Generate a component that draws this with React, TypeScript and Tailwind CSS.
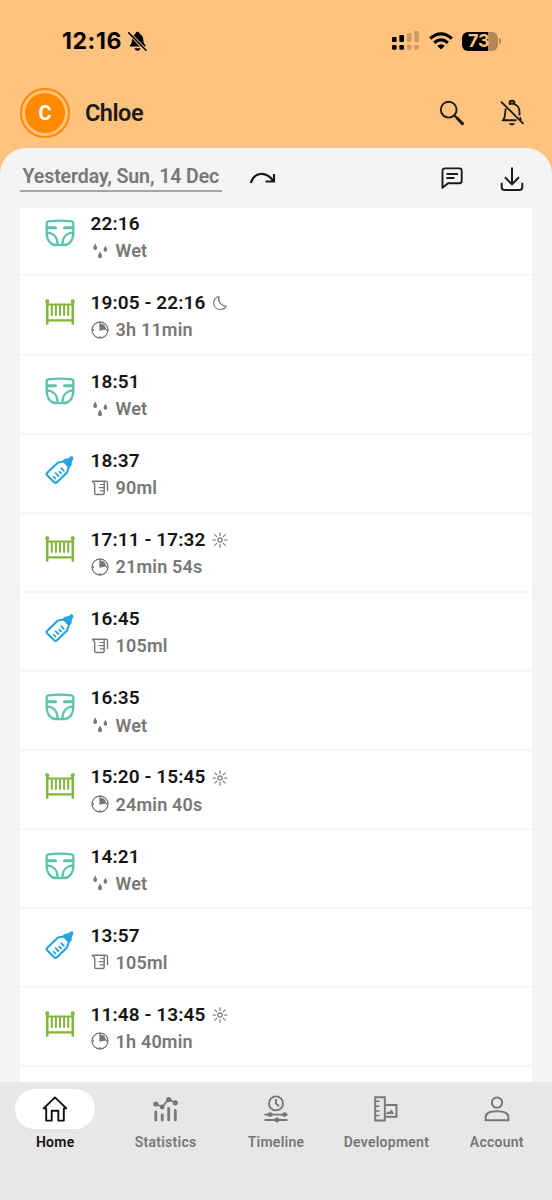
import type { ReactNode } from 'react';

type EntryKind = 'diaper' | 'sleep' | 'bottle';

type Entry = {
    kind: EntryKind;
    time: string;
    detail: string;
    period?: 'night' | 'day';
};

const entries: Entry[] = [
    { kind: 'diaper', time: '22:16', detail: 'Wet' },
    { kind: 'sleep', time: '19:05 - 22:16', detail: '3h 11min', period: 'night' },
    { kind: 'diaper', time: '18:51', detail: 'Wet' },
    { kind: 'bottle', time: '18:37', detail: '90ml' },
    { kind: 'sleep', time: '17:11 - 17:32', detail: '21min 54s', period: 'day' },
    { kind: 'bottle', time: '16:45', detail: '105ml' },
    { kind: 'diaper', time: '16:35', detail: 'Wet' },
    { kind: 'sleep', time: '15:20 - 15:45', detail: '24min 40s', period: 'day' },
    { kind: 'diaper', time: '14:21', detail: 'Wet' },
    { kind: 'bottle', time: '13:57', detail: '105ml' },
    { kind: 'sleep', time: '11:48 - 13:45', detail: '1h 40min', period: 'day' },
];

/* Entry icons */

function DiaperIcon() {
    return (
        <svg width="30" height="28" viewBox="0 0 30 28" fill="none" stroke="#5bc4ae" strokeWidth="2.3" strokeLinecap="round" strokeLinejoin="round">
            <path d="M1.7 3.8Q2 2.700 3.500 2.400Q15 .8 26.500 2.400Q28 2.700 28.300 3.800V14C28.300 21.500 24 26.200 18.500 26.200H11.500C6 26.200 1.700 21.500 1.700 14Z" />
            <path d="M2 8.800H10.500M28 8.800H19.500" strokeWidth="3" />
            <path d="M2 13.400C8.500 14 12.600 18.500 12.600 25.500M28 13.400C21.500 14 17.400 18.500 17.400 25.500" strokeWidth="2.400" />
        </svg>
    );
}

function CribIcon() {
    return (
        <svg width="30" height="28" viewBox="0 0 30 28" fill="none" stroke="#83b53b" strokeWidth="2.2" strokeLinecap="round">
            <path d="M2.2 3V25.500M27.800 3V25.500" strokeWidth="2.500" />
            <circle cx="2.200" cy="3.300" r="1" />
            <circle cx="27.800" cy="3.300" r="1" />
            <path d="M2 6.500H28M2 22.300H28" />
            <path d="M6.800 7.500V17M10.900 7.500V17M15 7.500V17M19.100 7.500V17M23.200 7.500V17" strokeWidth="2" />
        </svg>
    );
}

function BottleIcon() {
    return (
        <svg width="30" height="30" viewBox="0 0 30 30" fill="none" stroke="#27a3e2" strokeWidth="2.200" strokeLinecap="round" strokeLinejoin="round">
            <path d="M13 7.500L19 6.500L24 11.500L22 17.500L12 27.200Q10.500 28.400 9.200 27.200L2.100 20.200Q1.100 18.900 2.300 17.700Z" />
            <path d="M18.200 6.200Q19.300 3.400 22.300 4.200L24.700 3Q26 1.200 27.500 2.200Q28.500 3.600 27 5.300L26 7.500Q26.900 10.500 23.900 12Z" fill="#27a3e2" strokeWidth="1.200" />
            <path d="M10.500 23.600L8.700 21.800M13.400 21L10.500 18.100M16.100 18.400L14.300 16.600M18.800 15.800L16.200 13.200" strokeWidth="1.800" />
        </svg>
    );
}

/* Small detail icons, all 18x18 */

function DropsIcon() {
    return (
        <svg width="18" height="18" viewBox="0 0 18 18" fill="#777">
            <path d="M4.200 1.500C5.100 3.500 6.100 4.700 6.100 6A1.900 1.900 0 0 1 2.300 6C2.300 4.700 3.300 3.500 4.200 1.500Z" />
            <path d="M14.400 3.800C15.300 5.700 16.200 6.700 16.200 7.900A1.800 1.800 0 0 1 12.600 7.900C12.600 6.700 13.500 5.700 14.400 3.800Z" />
            <path d="M9 9.600C9.900 11.600 11 12.800 11 14.200A2 2 0 0 1 7 14.200C7 12.800 8.100 11.600 9 9.600Z" />
        </svg>
    );
}

function DurationIcon() {
    return (
        <svg width="18" height="18" viewBox="0 0 18 18" fill="none" stroke="#777" strokeWidth="1.300">
            <circle cx="9" cy="9" r="8" />
            <path d="M9 3.300V9L14.500 8A5.700 5.700 0 0 0 9 3.300Z" fill="#777" />
            <path d="M9 1V3M9 15V17M1 9H3M15 9H17" />
        </svg>
    );
}

function MeasureIcon() {
    return (
        <svg width="18" height="18" viewBox="0 0 18 18" fill="none" stroke="#777" strokeWidth="1.400" strokeLinecap="round" strokeLinejoin="round">
            <path d="M1.500 2.300H14.500Q16.500 2.300 16.500 4.300V11.500M1.500 2.300L3.700 5V14Q3.700 15.500 5.200 15.500H11.700Q13.200 15.500 13.200 14V2.800" />
            <path d="M12.900 5.500H9.500M12.900 8.700H8M12.900 11.900H9.500" strokeWidth="1.200" />
        </svg>
    );
}

function MoonIcon() {
    return (
        <svg width="16" height="16" viewBox="0 0 16 16" fill="none" stroke="#777" strokeWidth="1.200" strokeLinejoin="round">
            <path d="M7 1.700C3.700 2 1.500 4.800 1.600 8C1.700 11.800 4.400 14.500 8.200 14.500C10.900 14.500 13.300 13.100 14.200 11C9.600 11.300 5.500 7 7 1.700Z" />
        </svg>
    );
}

function SunIcon() {
    return (
        <svg width="16" height="16" viewBox="0 0 16 16" fill="none" stroke="#777" strokeWidth="1.200" strokeLinecap="round">
            <circle cx="8" cy="8" r="2.200" />
            <path d="M8 .8V3.500M8 12.500V15.200M.8 8H3.500M12.500 8H15.200M2.900 2.900L4.700 4.700M11.300 11.300L13.100 13.100M13.100 2.900L11.300 4.700M4.700 11.300L2.900 13.100" />
        </svg>
    );
}

const kindIcons: Record<EntryKind, { icon: ReactNode; detailIcon: ReactNode }> = {
    diaper: { icon: <DiaperIcon />, detailIcon: <DropsIcon /> },
    sleep: { icon: <CribIcon />, detailIcon: <DurationIcon /> },
    bottle: { icon: <BottleIcon />, detailIcon: <MeasureIcon /> },
};

/* Tab bar icons */

const tabs: { label: string; active?: boolean; icon: ReactNode }[] = [
    {
        label: 'Home',
        active: true,
        icon: (
            <svg width="28" height="28" viewBox="0 0 28 28" fill="none" stroke="currentColor" strokeWidth="1.900" strokeLinejoin="round" strokeLinecap="round">
                <path d="M2.700 13.400L14 2.400L25.300 13.400H22.800V25.600H17.300V15.700H10.700V25.600H5.200V13.400Z" />
            </svg>
        ),
    },
    {
        label: 'Statistics',
        icon: (
            <svg width="28" height="28" viewBox="0 0 28 28" fill="none" stroke="currentColor" strokeWidth="1.800">
                <path d="M3.800 9L10.200 12L16.700 4.400L23.300 7.800" />
                <g fill="currentColor" stroke="none">
                    <circle cx="3.800" cy="9" r="2.600" />
                    <circle cx="10.200" cy="12" r="2.400" />
                    <circle cx="16.700" cy="4.600" r="2.600" />
                    <circle cx="23.300" cy="7.800" r="2.600" />
                </g>
                <path d="M3.800 16.800V25M10.200 20V25M16.700 13.500V25M23.300 15.500V25" strokeWidth="2.800" strokeLinecap="round" />
            </svg>
        ),
    },
    {
        label: 'Timeline',
        icon: (
            <svg width="28" height="28" viewBox="0 0 28 28" fill="none" stroke="currentColor" strokeWidth="1.900">
                <circle cx="14" cy="8.400" r="7" />
                <path d="M14 4V8.500L17 11.200M2.500 19.600H25.500M2.500 25H25.500" />
                <g fill="currentColor" stroke="none">
                    <circle cx="8" cy="19.600" r="2.400" />
                    <circle cx="22.500" cy="19.600" r="2.400" />
                    <circle cx="15" cy="25" r="2.400" />
                </g>
            </svg>
        ),
    },
    {
        label: 'Development',
        icon: (
            <svg width="28" height="28" viewBox="0 0 28 28" fill="none" stroke="currentColor" strokeWidth="1.900">
                <path d="M3.200 2.200H12.800V25.500H3.200ZM12.800 10H24.500V21.700H12.800" />
                <path d="M3.500 6.200H7.500M3.500 11.200H7.500M3.500 16H7.500M3.500 20.500H7.500" strokeWidth="1.600" />
                <path d="M13.500 19L16.200 16.300L17.300 17.200L19.300 14.500L22.300 19Z" fill="currentColor" stroke="none" />
            </svg>
        ),
    },
    {
        label: 'Account',
        icon: (
            <svg width="28" height="28" viewBox="0 0 28 28" fill="none" stroke="currentColor" strokeWidth="2">
                <circle cx="14" cy="7.600" r="5.200" />
                <path d="M2.600 25.300V22.500C2.600 17.500 8.500 16.200 14 16.200S25.400 17.500 25.400 22.500V25.300Z" strokeLinejoin="round" />
            </svg>
        ),
    },
];

function StatusBar() {
    return (
        <div className="flex h-[78px] items-start justify-between pr-[51px] pl-[62px] pt-[29px] text-black">
            <div className="flex items-center gap-[5px]">
                <span className="w-[61px] whitespace-nowrap font-['Inter'] text-[23px] leading-6 font-bold tracking-[0.6px]">12:16</span>
                <svg width="19" height="21" viewBox="0 0 19 21">
                    <path d="M2 15.600V14.200C3.600 12.700 3.900 11.400 4 8.600C4.200 5.500 5.500 3.600 7.300 2.900C7.700 1.400 8.400 .8 9.500 .8S11.400 1.400 11.800 2.900C14 3.800 15.200 5.800 15.300 8.600C15.400 11.400 15.700 12.700 17.500 14.500V15.600Z" fill="black" />
                    <path d="M6.500 17.300H12.600C12.100 20.600 7 20.600 6.500 17.300Z" fill="black" />
                    <path d="M0 1.100L18.500 19.800" stroke="#ffc27f" strokeWidth="3.400" />
                    <path d="M.8 1.900L18 19.300" stroke="black" strokeWidth="1.500" strokeLinecap="round" />
                </svg>
            </div>
            <div className="flex items-center gap-[9px] pt-[2px]">
                <svg width="28" height="20" viewBox="0 0 28 20" fill="black">
                    <rect x="0" y="6" width="4.600" height="5" rx="1" />
                    <rect x="7.400" y="4" width="4.600" height="7" rx="1.200" />
                    <rect x="0" y="14" width="4.600" height="4.800" rx="1.200" />
                    <rect x="7.400" y="14" width="4.600" height="4.800" rx="1.200" />
                    <g fill="#cd9c66">
                        <rect x="14.900" y="2" width="4.600" height="9" rx="1.200" />
                        <rect x="22.300" y="0" width="4.600" height="11" rx="1.200" />
                        <rect x="14.900" y="14" width="4.600" height="4.800" rx="1.200" />
                        <rect x="22.300" y="14" width="4.600" height="4.800" rx="1.200" />
                    </g>
                </svg>
                <svg width="24" height="18" viewBox="0 0 24 18" fill="none" stroke="black" strokeWidth="3.300">
                    <path d="M1.200 6.500Q12 -2.800 22.800 6.500M5.200 10.800Q12 5 18.800 10.800" />
                    <path d="M8.200 13.700Q12 10.700 15.800 13.700L12 17.600Z" fill="black" stroke="none" />
                </svg>
                <div className="flex items-center gap-px">
                    <div className="flex h-[19px] w-9 items-center overflow-hidden rounded-[6px] bg-linear-to-r from-black from-[72%] to-[#b28859] to-[72%] pl-[6px] font-['Inter'] text-[18px] leading-none font-bold tracking-[-0.2px] text-[#ffc27f]">
                        73
                    </div>
                    <div className="h-[6px] w-[2px] rounded-r-full bg-[#b28859]" />
                </div>
            </div>
        </div>
    );
}

function Header() {
    return (
        <div className="flex h-[70px] items-center pr-[27px] pl-5 text-[#1b1b1b]">
            <div className="flex size-[50px] items-center justify-center rounded-full border-2 border-[#ff8a00]">
                <div className="flex size-10 items-center justify-center rounded-full bg-[#ff8a00] text-[20px] font-bold text-white">C</div>
            </div>
            <div className="ml-[15px] flex-1 pt-[2px] text-[23.5px] font-semibold tracking-[-0.5px]">Chloe</div>
            <svg width="26" height="26" viewBox="0 0 26 26" fill="none" stroke="currentColor" strokeLinecap="round">
                <circle cx="9.700" cy="9.700" r="7.900" strokeWidth="1.900" />
                <path d="M15.500 15.500L23.500 23.700" strokeWidth="2.400" />
                <path d="M18.500 18.500L23.500 23.700" strokeWidth="2.900" />
            </svg>
            <svg width="26" height="28" viewBox="0 0 26 28" fill="none" stroke="currentColor" strokeWidth="1.900" className="ml-[34px]">
                <path d="M10.800 5.300V3.400Q10.800 1.800 13 1.800T15.200 3.400V5.300" strokeWidth="2.200" />
                <path d="M10 5.500Q13 3.800 16 5.500C19.500 7 20.500 9.500 20.500 13V16.500M6.800 9.500C5.700 14 6.800 18 4.200 21.200H17.500M21 18.200L21.800 21.300" />
                <path d="M10 24.300H16C15.500 27 10.500 27 10 24.300Z" fill="currentColor" stroke="none" />
                <path d="M2 2.600L24.500 24.800" strokeWidth="1.800" />
            </svg>
        </div>
    );
}

function DateBar() {
    return (
        <div className="flex h-[60px] items-center pr-7 pl-5 text-[#1b1b1b]">
            <button className="h-[27px] w-[202px] border-b-2 border-[#a5a5a5] pl-[2.5px] text-left text-[19.5px] leading-6 font-semibold tracking-[-0.08px] whitespace-nowrap text-[#777]">
                Yesterday, Sun, 14 Dec
            </button>
            <svg width="27" height="14" viewBox="0 0 27 14" fill="none" stroke="currentColor" strokeWidth="2.100" className="ml-[27px]">
                <path d="M1.800 12C4.800 1.300 16.500 -.5 24 9.500M25 3V10.500H16.500" />
            </svg>
            <div className="flex-1" />
            <svg width="24" height="24" viewBox="0 0 24 24" fill="none" stroke="currentColor" strokeWidth="1.900" strokeLinejoin="round">
                <path d="M5 2.400H19.500Q21.700 2.400 21.700 4.800V14.800Q21.700 17.200 19.500 17.200H8L2.500 21.800V4.800Q2.500 2.400 5 2.400Z" />
                <path d="M6.500 8H18M6.500 12H14.500" />
            </svg>
            <svg width="24" height="26" viewBox="0 0 24 26" fill="none" stroke="currentColor" strokeWidth="2" className="mt-px ml-9">
                <path d="M12 1.500V18M5 11.300L12 18.300L19 11.300M1.700 16.800V21.300Q1.700 24 4.400 24H19.600Q22.300 24 22.300 21.300V16.800" />
            </svg>
        </div>
    );
}

function EntryRow({ entry }: { entry: Entry }) {
    const { icon, detailIcon } = kindIcons[entry.kind];

    return (
        <div className="flex h-[79.1px] shrink-0 border-b-2 border-[#f6f6f6]">
            <div className="flex h-[71px] w-20 items-center justify-center">{icon}</div>
            <div className="-ml-[9.5px] pt-[13.2px] whitespace-nowrap">
                <div className="flex h-[27px] items-center gap-[7px] text-[19px] font-semibold tracking-[0.1px] text-[#151515]">
                    {entry.time}
                    {entry.period === 'night' && <MoonIcon />}
                    {entry.period === 'day' && <SunIcon />}
                </div>
                <div className="flex h-[26px] items-center gap-[7px] text-[18px] font-semibold tracking-[0.2px] text-[#777]">
                    {detailIcon}
                    {entry.detail}
                </div>
            </div>
        </div>
    );
}

function TabBar() {
    return (
        <nav className="grid h-[118px] grid-cols-5 bg-[#e7e7e7] pt-[7px]">
            {tabs.map((tab) => (
                <div key={tab.label} className={`flex flex-col items-center ${tab.active ? 'text-[#111]' : 'text-[#777]'}`}>
                    <div className={`flex h-10 w-20 items-center justify-center rounded-full ${tab.active ? 'bg-white' : ''}`}>{tab.icon}</div>
                    <span className="mt-[3px] text-[14px] leading-5 font-semibold tracking-[0.25px]">{tab.label}</span>
                </div>
            ))}
        </nav>
    );
}

export default function App() {
    return (
        <div className="flex h-[1200px] w-[552px] flex-col overflow-hidden bg-[#ffc27f] font-['Roboto',sans-serif]">
            <StatusBar />
            <Header />
            <main className="flex min-h-0 flex-1 flex-col rounded-t-[26px] bg-[#f4f4f4]">
                <DateBar />
                <div className="mx-5 min-h-0 flex-1 overflow-hidden bg-white">
                    <div className="-mt-[10.7px] flex flex-col">
                        {entries.map((entry) => (
                            <EntryRow key={entry.time} entry={entry} />
                        ))}
                    </div>
                </div>
            </main>
            <TabBar />
        </div>
    );
}
